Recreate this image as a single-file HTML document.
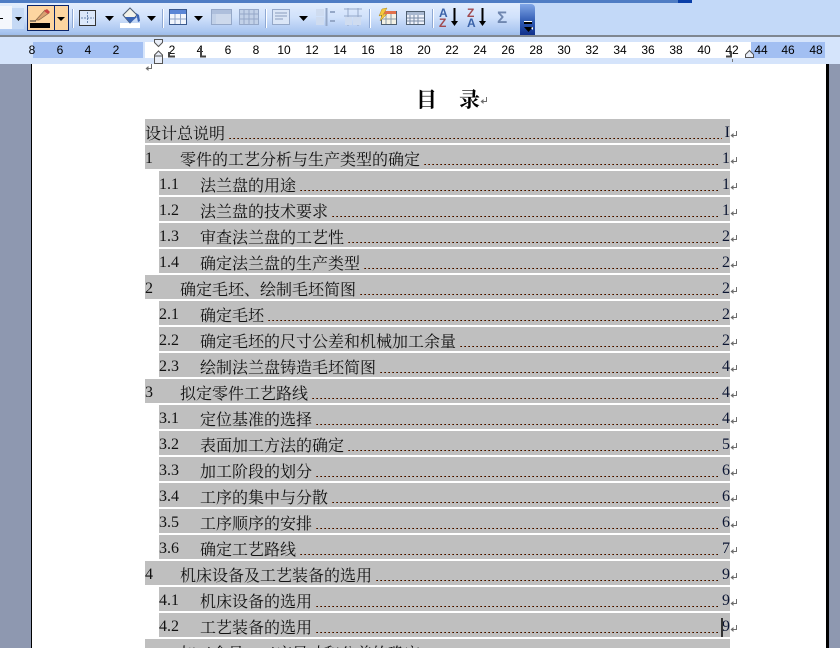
<!DOCTYPE html>
<html lang="zh"><head><meta charset="utf-8"><title>目录</title>
<style>
html{margin:0;padding:0;width:840px;height:648px;overflow:hidden}
body{margin:0;padding:0;width:840px;height:648px;overflow:hidden;position:relative;background:#fff;font-family:"Liberation Serif","Noto Serif CJK SC",serif}
#w{position:absolute;left:0;top:0;width:840px;height:648px;overflow:hidden}
.a{position:absolute}
#tb{left:0;top:0;width:840px;height:35px;background:#c3d9f8;border-bottom:2px solid #7f8791;box-sizing:content-box}
#bar{left:0;top:3px;width:520px;height:32px;background:linear-gradient(#e3eefd,#d0e1fb 45%,#a9c5f0 90%,#9dbbe8)}
#cap{left:520px;top:4px;width:15px;height:31px;background:linear-gradient(#7fa5e6,#2c57b0 60%,#10308c);border-radius:0 4px 0 0}
#tl{left:0;top:0;width:692px;height:3px;background:#4f7dc4}
#tl2{left:678px;top:0;width:14px;height:3px;background:#0a3fa8}
.sep{position:absolute;top:9px;width:1px;height:19px;background:#8fa9d4;box-shadow:1px 0 #fff}
#rul{left:0;top:37px;width:840px;height:27px;background:#d5e4fb}
#rw{left:145px;top:42px;width:606px;height:16px;background:#fff}
.rb{position:absolute;top:42px;height:16px;background:#a2bff2}
.n{position:absolute;top:43px;width:28px;margin-left:-14px;text-align:center;font:12px/14px "Liberation Sans",sans-serif;color:#000}
#gl{left:0;top:64px;width:31px;height:584px;background:#8e98b0}
#bl{left:31px;top:64px;width:1px;height:584px;background:#000}
#br{left:826px;top:64px;width:3px;height:584px;background:#000}
#gr{left:829px;top:64px;width:11px;height:584px;background:#8e98b0}
.r{position:absolute;right:110px;height:24px;background:#bfbfbf;font-size:16px;line-height:28px;color:#111;white-space:nowrap;display:flex}
.l1{left:145px}.l2{left:159px}
.num{display:inline-block;flex:none}
.l1 .num{width:36px}.l2 .num{width:42px}
.t{flex:none;margin-left:-1px;font-family:"Noto Serif CJK SC","Liberation Serif",serif;font-size:16px}
.d{flex:1;height:1px;margin:19px 12px 0 4px;background:repeating-linear-gradient(90deg,#8a3a10 0 1px,#201008 1px 2px,transparent 2px 4px)}
.p{position:absolute;right:0;top:0;color:#0c1633}
.m{position:absolute;left:730px;width:8px;height:8px;margin-top:2px}
</style></head><body><div id="w">
<svg width="0" height="0" style="position:absolute"><defs><symbol id="ret" viewBox="0 0 8 8"><path d="M6.500 0V4.500H3" fill="none" stroke="#6e6e6e" stroke-width="1"/><path d="M0.500 4.500L3.500 2V7z" fill="#6e6e6e"/></symbol></defs></svg>

<div class="a" id="tb"></div><div class="a" id="bar"></div><div class="a" id="cap"></div><div class="a" id="tl"></div><div class="a" id="tl2"></div>

<svg class="a" style="left:0;top:0" width="540" height="36" viewBox="0 0 540 36">
<rect x="0" y="6" width="12" height="23" fill="#f4f7fc"/><rect x="0" y="18" width="3" height="1" fill="#000"/>
<rect x="12" y="8" width="12" height="21" fill="#c5d9f5"/><path d="M15 17h7l-3.500 4z" fill="#000"/>
<rect x="27.500" y="5.500" width="41" height="25" fill="#fdd5a0" stroke="#0a246a"/><line x1="54.500" y1="5" x2="54.500" y2="31" stroke="#0a246a"/>
<rect x="30" y="23" width="20" height="5" fill="#000"/><path d="M30 21h6" stroke="#333"/><path d="M36 20l9-10 4 3-10 7z" fill="#d9a070" stroke="#8a6a4a" stroke-width=".7"/><path d="M44 11l3-2 3 3-2 2z" fill="#c44"/>
<path d="M57 17h8l-4 4z" fill="#000"/>
<rect x="79.500" y="10.500" width="16" height="15" fill="#dce8fa" stroke="#333"/><path d="M87.500 12v11M81 18h13" stroke="#6a86b0" stroke-dasharray="2 1"/>
<path d="M105 16h9l-4.500 5z" fill="#000"/>
<rect x="120" y="23" width="20" height="5" fill="#fff"/><path d="M123 15l7-7 7 7-7 8z" fill="#f2f2ea" stroke="#4a5a70"/><path d="M125 17h12l-7 6z" fill="#3a64b4"/><path d="M136 13l3 2 1 6-2 1z" fill="#3a64b4"/>
<path d="M147 16h9l-4.500 5z" fill="#000"/>
<rect x="169.500" y="9.500" width="17" height="15" fill="#f1f5fc" stroke="#39588c"/><rect x="170" y="10" width="16" height="4" fill="#5b86d6"/><path d="M175 14v10M180.500 14v10M170 19h16" stroke="#8ea4c8"/>
<path d="M194 16h9l-4.500 5z" fill="#000"/>
<rect x="211.500" y="9.500" width="20" height="15" fill="#c2d1e8" stroke="#95a8c8"/><rect x="212" y="10" width="19" height="4" fill="#aebfdc"/><rect x="216" y="14" width="15" height="10" fill="#cdd9ec"/>
<rect x="239.500" y="9.500" width="19" height="15" fill="#c2d1e8" stroke="#95a8c8"/><path d="M244 10v14M249 10v14M254 10v14M240 14h18M240 19h18" stroke="#95a8c8"/>
<rect x="272.500" y="9.500" width="17" height="15" fill="#dbe6f7" stroke="#95a8c8"/><path d="M275 13h12M275 16h12M275 19h8" stroke="#8a9cbc"/>
<path d="M299 16h9l-4.500 5z" fill="#000"/>
<rect x="316" y="9" width="8" height="7" fill="#cfdcf0"/><rect x="316" y="17" width="8" height="8" fill="#cfdcf0"/><path d="M326.500 8v18M330 12h5M330 21h5" stroke="#95a8c8" stroke-width="2"/>
<path d="M344 9h18M344 16h18M348 8v18M358 8v18" stroke="#95a8c8" fill="none"/><rect x="345" y="17" width="7" height="8" fill="#cfdcf0"/><rect x="353" y="17" width="8" height="8" fill="#cfdcf0"/>
<rect x="381.500" y="11.500" width="15" height="13" fill="#f4f1e4" stroke="#4f5f70"/><rect x="382" y="11" width="14" height="3" fill="#e2704a"/><path d="M386 14v10M391 14v10M382 19h14" stroke="#8a9aa8"/><path d="M382 9l5-1-4 7 4-1-7 7 2-6-3 1z" fill="#f5c83a" stroke="#b08a20" stroke-width=".5"/>
<rect x="406.500" y="11.500" width="18" height="13" fill="#eef2fa" stroke="#4f5f70"/><rect x="407" y="12" width="17" height="3" fill="#a8b8d0"/><path d="M410 15v9M414 15v9M418 15v9M407 18h17M407 21h17" stroke="#7a8ca8"/>
<text x="439" y="17" font-family="Liberation Sans" font-size="12" font-weight="bold" fill="#3a62a8">A</text><text x="439" y="27" font-family="Liberation Sans" font-size="12" font-weight="bold" fill="#a04a50">Z</text>
<path d="M454.500 8v15" stroke="#000" stroke-width="2"/><path d="M451 21h7l-3.500 5z" fill="#000"/>
<text x="467" y="17" font-family="Liberation Sans" font-size="12" font-weight="bold" fill="#a04a50">Z</text><text x="467" y="27" font-family="Liberation Sans" font-size="12" font-weight="bold" fill="#3a62a8">A</text>
<path d="M482.500 8v15" stroke="#000" stroke-width="2"/><path d="M479 21h7l-3.500 5z" fill="#000"/>
<text x="497" y="23" font-family="Liberation Sans" font-size="17" font-weight="bold" fill="#6f87b0">Σ</text>
<rect x="524" y="21" width="8" height="1" fill="#fff"/><rect x="524" y="22" width="8" height="2" fill="#000"/><path d="M524 27h9l-4.500 5z" fill="#000"/><path d="M531 28l2-1v3z" fill="#fff"/>
</svg>
<div class="sep" style="left:72px"></div><div class="sep" style="left:162px"></div><div class="sep" style="left:265px"></div><div class="sep" style="left:369px"></div><div class="sep" style="left:432px"></div>

<div class="a" id="rul"></div><div class="a" id="rw"></div>
<div class="rb" style="left:33px;width:110px"></div><div class="rb" style="left:751px;width:74px"></div>
<div class="n" style="left:32px">8</div><div class="n" style="left:60px">6</div><div class="n" style="left:88px">4</div><div class="n" style="left:116px">2</div>
<div class="n" style="left:172px">2</div><div class="n" style="left:200px">4</div><div class="n" style="left:228px">6</div><div class="n" style="left:256px">8</div><div class="n" style="left:284px">10</div><div class="n" style="left:312px">12</div><div class="n" style="left:340px">14</div><div class="n" style="left:368px">16</div><div class="n" style="left:396px">18</div><div class="n" style="left:424px">20</div><div class="n" style="left:452px">22</div><div class="n" style="left:480px">24</div><div class="n" style="left:508px">26</div><div class="n" style="left:536px">28</div><div class="n" style="left:564px">30</div><div class="n" style="left:592px">32</div><div class="n" style="left:620px">34</div><div class="n" style="left:648px">36</div><div class="n" style="left:676px">38</div><div class="n" style="left:704px">40</div><div class="n" style="left:732px">42</div><div class="n" style="left:761px">44</div><div class="n" style="left:788px">46</div><div class="n" style="left:816px">48</div>
<svg class="a" style="left:0;top:36px" width="840" height="36" viewBox="0 0 840 36">
<path d="M154.500 3.500h8v3l-4 4-4-4z" fill="#e9eef8" stroke="#555"/><path d="M158.500 15l4 4v8.500h-8V19z" fill="#e9eef8" stroke="#555"/><path d="M154 20h9" stroke="#555"/>
<path d="M169 16v4.500h6" fill="none" stroke="#444" stroke-width="2"/><path d="M201 12v8.500h5" fill="none" stroke="#444" stroke-width="2"/><path d="M731 16v4.500h-5" fill="none" stroke="#444" stroke-width="2"/><path d="M732.500 23v3" stroke="#777"/>
<path d="M749.500 14.500l4 4v3h-8v-3z" fill="#e9eef8" stroke="#555"/>
</svg>

<div class="a" style="left:0;top:64px;width:840px;height:584px;background:#fff"></div>
<div class="a" id="gl"></div><div class="a" id="bl"></div><div class="a" id="br"></div><div class="a" id="gr"></div>
<svg class="m" style="left:145px;top:62px"><use href="#ret"/></svg>

<div class="a" style="left:416px;top:86px;font:bold 21px/26px 'Noto Serif CJK SC',serif;color:#000;white-space:pre">目</div>
<div class="a" style="left:459px;top:86px;font:bold 21px/26px 'Noto Serif CJK SC',serif;color:#000;white-space:pre">录</div>
<svg class="m" style="left:480px;top:95px"><use href="#ret"/></svg>

<div class="r l1" style="top:119px"><span class="t" style="margin-left:0">设计总说明</span><span class="d" style="margin-right:8px"></span><span class="p">I</span></div>
<div class="r l1" style="top:145px"><span class="num">1</span><span class="t">零件的工艺分析与生产类型的确定</span><span class="d"></span><span class="p">1</span></div>
<div class="r l2" style="top:171px"><span class="num">1.1</span><span class="t">法兰盘的用途</span><span class="d"></span><span class="p">1</span></div>
<div class="r l2" style="top:197px"><span class="num">1.2</span><span class="t">法兰盘的技术要求</span><span class="d"></span><span class="p">1</span></div>
<div class="r l2" style="top:223px"><span class="num">1.3</span><span class="t">审查法兰盘的工艺性</span><span class="d"></span><span class="p">2</span></div>
<div class="r l2" style="top:249px"><span class="num">1.4</span><span class="t">确定法兰盘的生产类型</span><span class="d"></span><span class="p">2</span></div>
<div class="r l1" style="top:275px"><span class="num">2</span><span class="t">确定毛坯、绘制毛坯简图</span><span class="d"></span><span class="p">2</span></div>
<div class="r l2" style="top:301px"><span class="num">2.1</span><span class="t">确定毛坯</span><span class="d"></span><span class="p">2</span></div>
<div class="r l2" style="top:327px"><span class="num">2.2</span><span class="t">确定毛坯的尺寸公差和机械加工余量</span><span class="d"></span><span class="p">2</span></div>
<div class="r l2" style="top:353px"><span class="num">2.3</span><span class="t">绘制法兰盘铸造毛坯简图</span><span class="d"></span><span class="p">4</span></div>
<div class="r l1" style="top:379px"><span class="num">3</span><span class="t">拟定零件工艺路线</span><span class="d"></span><span class="p">4</span></div>
<div class="r l2" style="top:405px"><span class="num">3.1</span><span class="t">定位基准的选择</span><span class="d"></span><span class="p">4</span></div>
<div class="r l2" style="top:431px"><span class="num">3.2</span><span class="t">表面加工方法的确定</span><span class="d"></span><span class="p">5</span></div>
<div class="r l2" style="top:457px"><span class="num">3.3</span><span class="t">加工阶段的划分</span><span class="d"></span><span class="p">6</span></div>
<div class="r l2" style="top:483px"><span class="num">3.4</span><span class="t">工序的集中与分散</span><span class="d"></span><span class="p">6</span></div>
<div class="r l2" style="top:509px"><span class="num">3.5</span><span class="t">工序顺序的安排</span><span class="d"></span><span class="p">6</span></div>
<div class="r l2" style="top:535px"><span class="num">3.6</span><span class="t">确定工艺路线</span><span class="d"></span><span class="p">7</span></div>
<div class="r l1" style="top:561px"><span class="num">4</span><span class="t">机床设备及工艺装备的选用</span><span class="d"></span><span class="p">9</span></div>
<div class="r l2" style="top:587px"><span class="num">4.1</span><span class="t">机床设备的选用</span><span class="d"></span><span class="p">9</span></div>
<div class="r l2" style="top:613px"><span class="num">4.2</span><span class="t">工艺装备的选用</span><span class="d"></span><span class="p">9</span></div>
<div class="r l1" style="top:639px"><span class="num" style="position:relative;top:3px">5</span><span class="t">加工余量、工序尺寸和公差的确定</span><span class="d"></span></div>
<div class="a" style="left:721px;top:618px;width:2px;height:19px;background:#333"></div>

<svg class="m" style="top:129px"><use href="#ret"/></svg><svg class="m" style="top:155px"><use href="#ret"/></svg><svg class="m" style="top:181px"><use href="#ret"/></svg><svg class="m" style="top:207px"><use href="#ret"/></svg><svg class="m" style="top:233px"><use href="#ret"/></svg><svg class="m" style="top:259px"><use href="#ret"/></svg><svg class="m" style="top:285px"><use href="#ret"/></svg><svg class="m" style="top:311px"><use href="#ret"/></svg><svg class="m" style="top:337px"><use href="#ret"/></svg><svg class="m" style="top:363px"><use href="#ret"/></svg><svg class="m" style="top:389px"><use href="#ret"/></svg><svg class="m" style="top:415px"><use href="#ret"/></svg><svg class="m" style="top:441px"><use href="#ret"/></svg><svg class="m" style="top:467px"><use href="#ret"/></svg><svg class="m" style="top:493px"><use href="#ret"/></svg><svg class="m" style="top:519px"><use href="#ret"/></svg><svg class="m" style="top:545px"><use href="#ret"/></svg><svg class="m" style="top:571px"><use href="#ret"/></svg><svg class="m" style="top:597px"><use href="#ret"/></svg><svg class="m" style="top:623px"><use href="#ret"/></svg>
</div></body></html>
